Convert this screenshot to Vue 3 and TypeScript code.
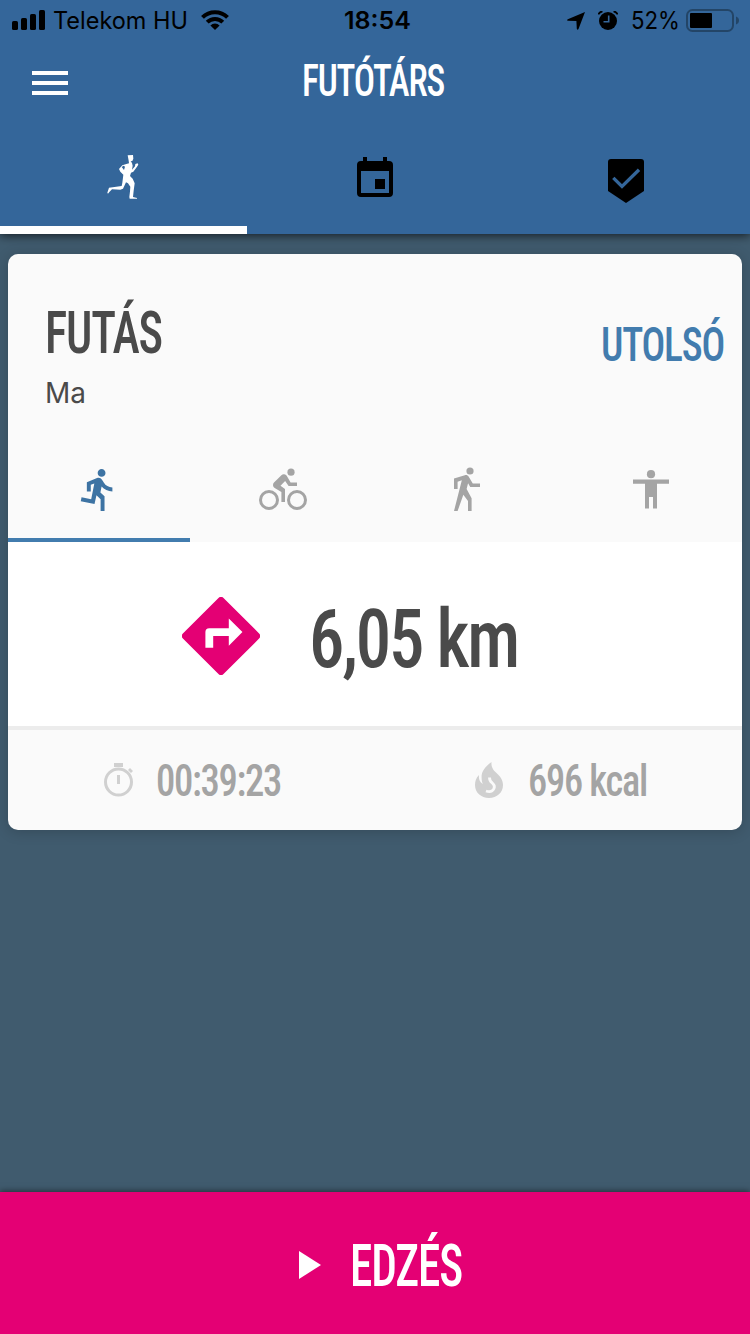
<script setup lang="ts">
import { h, type FunctionalComponent } from 'vue'

interface FitProps {
  text: string
  width: number
  height: number
  size: number
  baseline: number
}

// One line of text set to an exact measure; gives the narrow display face its width.
const FitText: FunctionalComponent<FitProps> = (p) =>
  h('svg', { width: p.width, height: p.height, class: 'fit', overflow: 'visible' }, [
    h(
      'text',
      {
        x: 0,
        y: p.baseline,
        'font-size': p.size,
        textLength: p.width,
        lengthAdjust: 'spacingAndGlyphs',
        fill: 'currentColor',
      },
      p.text,
    ),
  ])
FitText.props = ['text', 'width', 'height', 'size', 'baseline']
</script>

<template>
  <div class="screen">
    <header class="header">
      <div class="status">
        <div class="status-left">
          <svg width="33" height="20" viewBox="0 0 33 20">
            <rect y="11" width="6" height="9" rx="1.6" />
            <rect x="9" y="8" width="6" height="12" rx="1.6" />
            <rect x="18" y="4" width="6" height="16" rx="1.6" />
            <rect x="27" width="6" height="20" rx="1.6" />
          </svg>
          <FitText class="carrier" text="Telekom HU" :width="135" :height="30" :size="24" :baseline="24" />
          <svg class="wifi" width="28" height="20" viewBox="0 0 28 20">
            <g fill="none" stroke="#000" stroke-width="4">
              <path d="M1.5 7.4a17.6 17.6 0 0 1 25 0" />
              <path d="M6.2 12.2a11 11 0 0 1 15.6 0" />
            </g>
            <path d="M14 20l-4.6-4.5a6.5 6.5 0 0 1 9.2 0z" />
          </svg>
        </div>
        <FitText class="clock" text="18:54" :width="67" :height="30" :size="24" :baseline="24" />
        <div class="status-right">
          <svg width="18" height="18" viewBox="0 0 18 18"><path d="M18 0L11.6 16.800q-1 2-1.800 0L9.400 8.900 1 8.800q-1.800-.5-.2-1.500z" /></svg>
          <svg class="alarm" width="20" height="19" viewBox="0 0 20 19">
            <circle cx="10" cy="10" r="9" />
            <path d="M.3 3.5Q1.5.8 4.5.3M19.7 3.5Q18.5.8 15.5.3" fill="none" stroke="#000" stroke-width="1.8" />
            <path d="M10.7 4.5v6.3H5.5" fill="none" stroke="#34669a" stroke-width="1.6" />
          </svg>
          <FitText class="percent" text="52%" :width="49" :height="30" :size="24" :baseline="24" />
          <svg class="battery" width="53" height="23" viewBox="0 0 53 23">
            <rect x="1" y="1" width="46" height="21" rx="5.5" fill="none" stroke="#234567" stroke-width="2" />
            <rect x="4" y="4" width="22" height="15" rx="1" />
            <path d="M50 7.5q3 1.200 3 4t-3 4z" fill="#234567" />
          </svg>
        </div>
      </div>
      <div class="titlebar">
        <svg class="menu" width="36" height="24" viewBox="0 0 36 24" fill="#fff">
          <rect width="36" height="4" /><rect y="10" width="36" height="4" /><rect y="20" width="36" height="4" />
        </svg>
        <h1 class="title display"><FitText text="FUTÓTÁRS" :width="142" :height="50" :size="44.5" :baseline="42" /></h1>
      </div>
      <nav class="tabs">
        <div class="tab active">
          <svg class="athlete" width="34" height="46" viewBox="75 42 102 138" fill="#fff">
            <path d="M143 46l16-1 1 11-3 7-5 1 4 5 2 8-2 12 9-10 1-7 7-2 2 4-4 6-11 15-7 3-3 10 8 8 6 14-3 22-2 19 12 3v2h-22l-1-5 2-17 1-14-7-10-6-3-9 19-8 3-25-1-8 8-4 5-2-3 5-15 11-1 27-4 2-10 3-24-9-9-4-8 10-11 12-4 8-2-1-8zM131 77l-6 4 7 9 3-10z" fill-rule="evenodd" />
          </svg>
        </div>
        <div class="tab">
          <svg class="calendar" width="48" height="48" viewBox="0 0 24 24">
            <path d="M17 12h-5v5h5zM16 1v2H8V1H6v2H5a2 2 0 0 0-2 2v14a2 2 0 0 0 2 2h14a2 2 0 0 0 2-2V5a2 2 0 0 0-2-2h-1V1zm3 18H5V8h14z" />
          </svg>
        </div>
        <div class="tab">
          <svg class="badge" width="36" height="44" viewBox="0 0 36 44">
            <path d="M3 0h30q3 0 3 3v29L18 44 0 32V3q0-3 3-3z" />
            <path d="M5.3 18.800l8.700 8.700L31 10.800" fill="none" stroke="#34669a" stroke-width="3.3" />
          </svg>
        </div>
      </nav>
    </header>

    <main class="content">
      <section class="card">
        <div class="card-head">
          <div>
            <h2 class="activity display"><FitText text="FUTÁS" :width="117" :height="62" :size="59" :baseline="50" /></h2>
            <p class="day"><FitText text="Ma" :width="41" :height="30" :size="29" :baseline="24" /></p>
          </div>
          <div class="last display"><FitText text="UTOLSÓ" :width="123" :height="50" :size="49" :baseline="42" /></div>
        </div>
        <div class="kinds">
          <div class="kind active">
            <svg class="run" width="33" height="42" viewBox="2.5 1.48 16.8 21.5" preserveAspectRatio="none">
              <path d="M13.490 5.480c1.100 0 2-.9 2-2s-.9-2-2-2-2 .9-2 2 .9 2 2 2zm-3.600 13.900l1-4.400 2.100 2v6h2v-7.500l-2.100-2 .6-3c1.300 1.500 3.300 2.500 5.500 2.500v-2c-1.900 0-3.500-1-4.300-2.400l-1-1.600c-.4-.6-1-1-1.700-1-.3 0-.5.1-.8.1l-5.200 2.200v4.700h2v-3.400l1.800-.7-1.600 8.100-4.900-1-.4 2 7 1.400z" />
            </svg>
          </div>
          <div class="kind">
            <svg class="bike" width="48" height="48" viewBox="0 0 24 24">
              <g fill="none" stroke="currentColor" stroke-width="1.5"><circle cx="5" cy="17" r="4.25" /><circle cx="19" cy="17" r="4.25" /></g>
              <path d="M14.800 10H19V8.200h-3.200l-1.940-3.270a1.700 1.700 0 0 0-2.660-.33L7.500 8.290A1.700 1.700 0 0 0 7.850 10.970L11.200 13v5H13v-6.500l-2.250-1.650 2.320-2.350z" />
              <circle cx="16" cy="3.100" r="1.8" />
            </svg>
          </div>
          <div class="kind">
            <svg class="walk" width="48" height="48" viewBox="0 0 24 24">
              <path d="M14.120 10H19V8.200h-3.620l-2-3.330c-.3-.5-.84-.84-1.460-.84-.18 0-.34.03-.5.080L6 5.800V11h1.800V7.330l2.110-.66L6 22h1.800l2.870-8.110L13 17v5h1.800v-6.410l-2.490-4.540.73-2.870z" />
              <circle cx="14" cy="2" r="1.8" />
            </svg>
          </div>
          <div class="kind">
            <svg class="stand" width="36" height="39" viewBox="0 0 36 39">
              <circle cx="18" cy="4.200" r="4.1" />
              <path d="M0 9.500h36v4.200H24v24.800h-4V27h-4v11.500h-4V13.700H0z" />
            </svg>
          </div>
        </div>
        <div class="distance display">
          <svg class="sign" width="78" height="78" viewBox="2 2 20 20">
            <path fill="#e40074" fill-rule="evenodd" d="M14 14.500V12h-4v3H8v-4a1 1 0 0 1 1-1h5V7.500l3.500 3.500zM21.710 11.290l-9-9a1 1 0 0 0-1.420 0l-9 9a1 1 0 0 0 0 1.420l9 9a1 1 0 0 0 1.420 0l9-9a1 1 0 0 0 0-1.420z" />
          </svg>
          <FitText text="6,05 km" :width="209" :height="80" :size="81" :baseline="71" />
        </div>
        <div class="stats display">
          <div class="stat time">
            <svg width="30" height="36" viewBox="0 0 30 36">
              <circle cx="14.5" cy="20" r="13" fill="none" stroke="currentColor" stroke-width="3" />
              <path d="M10 1h9v4h-9zM13 13h3v9h-3zM24 8l2-2 3 3-2 2z" />
            </svg>
            <FitText class="value" text="00:39:23" :width="125" :height="44" :size="44" :baseline="34" />
          </div>
          <div class="stat energy">
            <svg width="28" height="36" viewBox="475 762 28 36">
              <path d="M491.500 762C486 766 481 771 481.600 778c.1 3 .6 4.800 1.400 6-3-1.500-4.500-5-4-9-3 3-4 6-4 10 0 7.500 6 13 14 13s14-5.500 14-13c0-5-3-9-6.500-12s-5.500-6.500-5-11z" />
              <path d="M489.500 777.500q-.2 3 2.800 5.500t1.700 5.500q-2.200 4.500-8 2.500" fill="none" stroke="#fafafa" stroke-width="2.8" />
            </svg>
            <FitText class="value" text="696 kcal" :width="119" :height="44" :size="44" :baseline="34" />
          </div>
        </div>
      </section>
    </main>

    <button class="start display" type="button">
      <svg width="22" height="28" viewBox="0 0 22 28" fill="#fff"><path d="M0 0l22 14L0 28z" /></svg>
      <FitText class="start-label" text="EDZÉS" :width="112" :height="60" :size="59" :baseline="50" />
    </button>
  </div>
</template>

<style>
body { background: #405b6e; }
</style>

<style scoped>
.screen {
  width: 750px;
  height: 1334px;
  display: flex;
  flex-direction: column;
  overflow: hidden;
  background: #405b6e;
  font-family: Inter, "Liberation Sans", sans-serif;
}
svg { display: block; flex: none; }
.fit { overflow: visible; }
h1, h2, p { margin: 0; font-weight: inherit; }
.display {
  font-family: "Roboto Condensed", "Liberation Sans Narrow", Roboto, sans-serif;
  font-stretch: 75%;
  font-weight: 500;
  letter-spacing: -1.5px;
}
.header {
  height: 234px;
  flex: none;
  background: #34669a;
  box-shadow: 0 1px 10px rgba(0, 0, 0, 0.75);
  z-index: 1;
}
.status {
  height: 40px;
  display: grid;
  grid-template-columns: 344px 67px 1fr;
  padding-top: 5px;
  box-sizing: border-box;
}
.status-left, .status-right { display: flex; align-items: flex-start; }
.status-left { padding-left: 12px; }
.status-left > svg { margin-top: 5px; }
.status-left > .carrier { margin: 0 0 0 8px; }
.status-left > .wifi { margin-left: 13px; }
.clock { font-weight: 600; }
.status-right { padding-left: 156px; }
.status-right > svg { margin-top: 7px; }
.status-right > .alarm { margin: 6px 0 0 13px; }
.status-right > .percent { margin: 0 0 0 13px; }
.status-right > .battery { margin: 4px 0 0 6px; }
.titlebar {
  height: 86px;
  display: grid;
  grid-template-columns: 32px 270px 1fr;
}
.menu { grid-column: 2; margin-top: 31px; }
.title { grid-column: 3; margin-top: 14px; color: #fff; font-weight: 500; }
.tabs { height: 108px; display: grid; grid-template-columns: 247px 1fr 247px; }
.tab { display: flex; justify-content: center; align-items: flex-start; border-bottom: 8px solid transparent; }
.tab.active { border-color: #fff; }
.athlete { margin: 28px 4px 0 0; }
.calendar { margin-top: 29px; }
.badge { margin: 33px 2px 0 0; }
.content { flex: 1; padding: 20px 8px 0; }
.card {
  height: 576px;
  border-radius: 10px;
  background: #fafafa;
  overflow: hidden;
  color: #4a4a4a;
  box-shadow: 0 2px 14px rgba(0, 0, 0, 0.18);
}
.card-head {
  height: 184px;
  display: flex;
  justify-content: space-between;
  padding: 49px 18px 0 37px;
  box-sizing: border-box;
}
.day { margin-top: 14px; font-weight: 400; }
.last { color: #427cae; margin-top: 16px; }
.kinds { height: 104px; display: grid; grid-template-columns: 182px 186px 182px 184px; color: #a4a4a4; }
.kind { display: flex; justify-content: center; align-items: flex-start; fill: currentColor; border-bottom: 4px solid transparent; }
.kind.active { color: #3d73a3; border-color: #427cae; }
.run { margin: 31px 6px 0 0; }
.bike { margin-top: 28px; }
.walk { margin: 29px 0 0 -2px; }
.stand { margin: 32px 0 0 2px; }
.distance {
  height: 184px;
  display: flex;
  gap: 49px;
  padding: 54px 0 0 174px;
  box-sizing: border-box;
  background: #fff;
  letter-spacing: -2.5px;
}
.sign { margin-top: 1px; }
.stats {
  height: 104px;
  border-top: 4px solid #ececec;
  box-sizing: border-box;
  display: grid;
  grid-template-columns: 96px 371px 1fr;
  color: #a4a4a4;
}
.stat { display: flex; padding-top: 32px; }
.time { grid-column: 2; }
.stat > svg:first-child { color: #d0d0d0; fill: currentColor; }
.stat > .value { margin-left: 22px; }
.energy > .value { margin-left: 25px; }
.start {
  height: 142px;
  flex: none;
  display: flex;
  align-items: flex-start;
  padding: 59px 0 0 299px;
  border: 0;
  background: #e40074;
  color: #fff;
  box-shadow: 0 -1px 6px rgba(0, 0, 0, 0.5);
}
.start > .start-label { margin: -15px 0 0 29px; }
</style>
